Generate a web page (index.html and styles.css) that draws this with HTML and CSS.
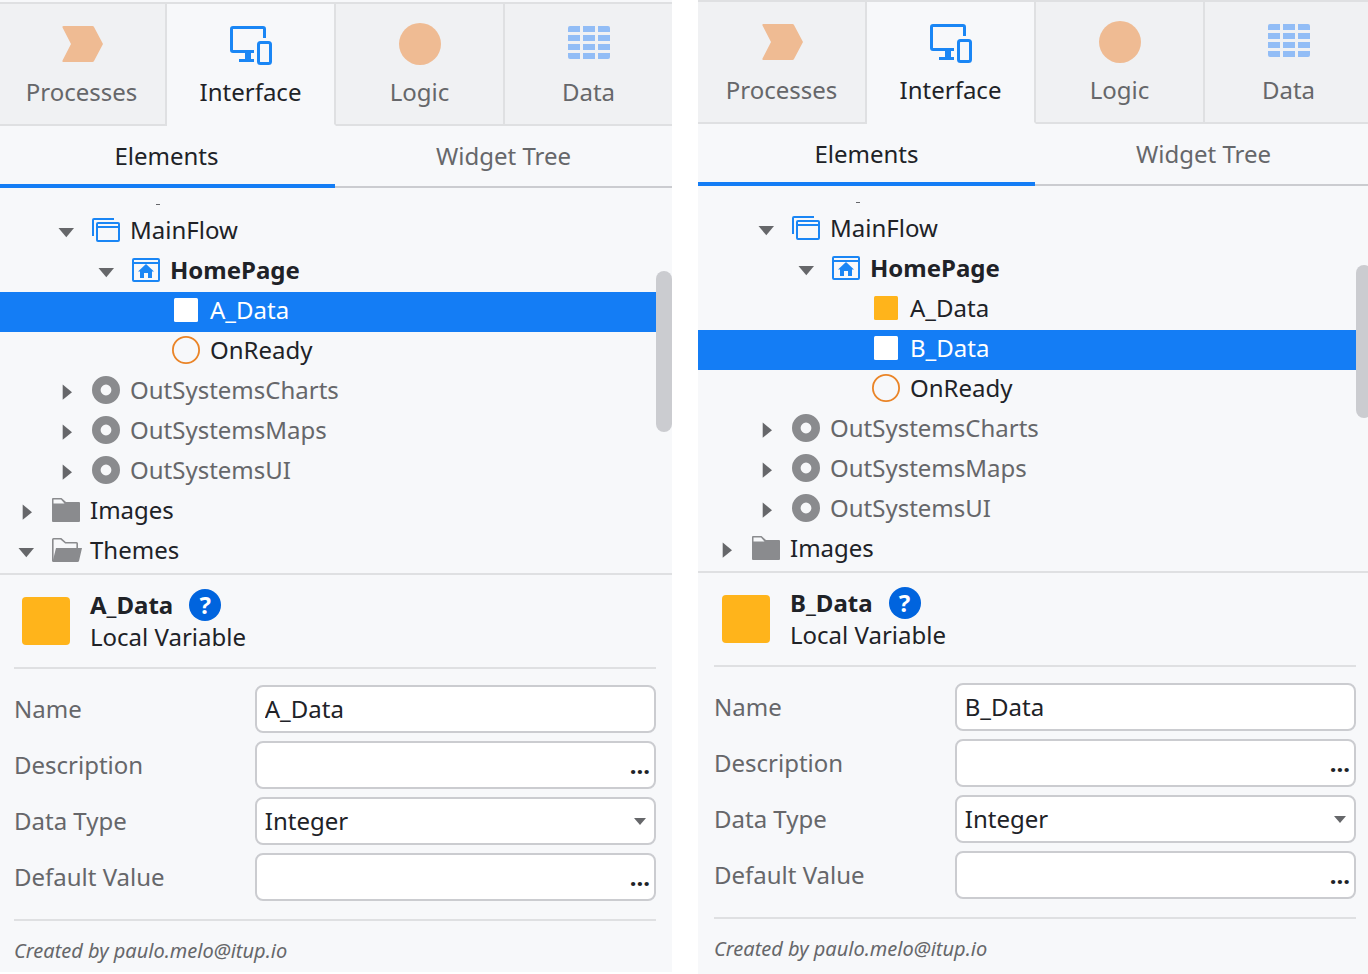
FILE: index.html
```html
<!doctype html>
<html lang="en">
<head>
<meta charset="utf-8">
<title>Service Studio</title>
<link rel="stylesheet" href="styles.css">
</head>

<body>
<!-- shared icons -->
<svg class="sprite" aria-hidden="true">
    <symbol id="processes" viewBox="0 0 42 42"><path d="M2.500 3H31.500Q32.500 3 33 4L42 21L33 38Q32.500 39 31.500 39H2.500Q.8 39 1.500 37.500L10 21L1.500 4.500Q.8 3 2.500 3z" fill="#efbb93"/></symbol>
    <symbol id="interface" viewBox="0 0 42 42">
        <path d="M34.500 15V6Q34.500 4.500 33 4.500H3Q1.500 4.500 1.500 6V27Q1.500 28.500 3 28.500H24" fill="none" stroke="#1a86f5" stroke-width="3"/>
        <path d="M15 29h6v7h3v3H9v-3h6z" fill="#1a86f5"/>
        <rect x="28.500" y="19.500" width="12" height="21" rx="2" fill="none" stroke="#1a86f5" stroke-width="3"/>
    </symbol>
    <symbol id="logic" viewBox="0 0 42 42"><circle cx="21" cy="21" r="21" fill="#efbb93"/></symbol>
    <symbol id="data" viewBox="0 0 42 42"><path d="M2 3h10v6H0V5Q0 3 2 3zM15 3h12v6H15zM30 3h10q2 0 2 2v4H30zM0 12h12v6H0zM15 12h12v6H15zM30 12h12v6H30zM0 21h12v6H0zM15 21h12v6H15zM30 21h12v6H30zM0 30h12v6H2q-2 0-2-2zM15 30h12v6H15zM30 30h12v4q0 2-2 2H30z" fill="#92bdf6"/></symbol>
    <symbol id="down" viewBox="0 0 16 28"><path d="M.500 12h15.500l-7.700 9.300z" fill="#66676a"/></symbol>
    <symbol id="right" viewBox="0 0 16 28"><path d="M4.700 8.500v15.300l9.300-7.600z" fill="#66676a"/></symbol>
    <symbol id="flow" viewBox="0 0 28 28">
        <path d="M1 20V4Q1 3 2 3H22" fill="none" stroke="#1a86f5" stroke-width="2"/>
        <rect x="5" y="7" width="22" height="18" rx="1" fill="none" stroke="#1a86f5" stroke-width="2"/>
        <path d="M5 11H27" stroke="#1a86f5" stroke-width="2"/>
    </symbol>
    <symbol id="home" viewBox="0 0 28 28">
        <rect x="1" y="3" width="26" height="22" rx="1" fill="none" stroke="#1a86f5" stroke-width="2"/>
        <path d="M1 7H27" stroke="#1a86f5" stroke-width="2"/>
        <path d="M14 8L22 15.500H20V22H16V17H12V22H8V15.500H6z" fill="#1a86f5"/>
    </symbol>
    <symbol id="variable" viewBox="0 0 28 28"><rect x="2" y="2" width="24" height="24" rx="1.500" fill="currentColor"/></symbol>
    <symbol id="event" viewBox="0 0 28 28"><circle cx="14" cy="14" r="13.100" fill="none" stroke="#ea8427" stroke-width="1.800"/></symbol>
    <symbol id="module" viewBox="0 0 28 28"><circle cx="14" cy="14" r="9.700" fill="none" stroke="#8a8b8e" stroke-width="8.600"/></symbol>
    <symbol id="folder" viewBox="0 0 28 28"><path fill-rule="evenodd" d="M1 2H9.500L14 6H27Q28 6 28 7V25Q28 26 27 26H1Q0 26 0 25V3Q0 2 1 2zM1.500 3.500V7.500H12.500L9 3.500z" fill="#8a8b8e"/></symbol>
    <symbol id="folder-open" viewBox="0 0 30 28">
        <path d="M.8 25V3.500Q.8 2.800 1.500 2.800H9L13.500 6.800H24.500Q25.200 6.800 25.200 7.500V13" fill="none" stroke="#8a8b8e" stroke-width="1.600"/>
        <path d="M4 12H30L27 25Q26.700 26 25.500 26H1Q0 26 .3 25L1 24z" fill="#8a8b8e"/>
    </symbol>
</svg>

<div class="wrap">
    <section class="panel first">
        <div class="inner">
            <nav class="tabs">
                <button type="button"><svg><use href="#processes"/></svg>Processes</button>
                <button type="button" class="on"><svg><use href="#interface"/></svg>Interface</button>
                <button type="button"><svg><use href="#logic"/></svg>Logic</button>
                <button type="button"><svg><use href="#data"/></svg>Data</button>
            </nav>
            <div class="subtabs">
                <button type="button" class="on">Elements</button>
                <button type="button">Widget Tree</button>
            </div>
            <div class="tree">
                <ul>
                    <li class="cut"></li>
                    <li class="lv1"><svg class="arrow"><use href="#down"/></svg><svg class="icon"><use href="#flow"/></svg>MainFlow</li>
                    <li class="lv2 strong"><svg class="arrow"><use href="#down"/></svg><svg class="icon"><use href="#home"/></svg>HomePage</li>
                    <li class="lv3 selected"><svg class="icon"><use href="#variable"/></svg>A_Data</li>
                    <li class="lv3"><svg class="icon"><use href="#event"/></svg>OnReady</li>
                    <li class="lv1 muted"><svg class="arrow"><use href="#right"/></svg><svg class="icon"><use href="#module"/></svg>OutSystemsCharts</li>
                    <li class="lv1 muted"><svg class="arrow"><use href="#right"/></svg><svg class="icon"><use href="#module"/></svg>OutSystemsMaps</li>
                    <li class="lv1 muted"><svg class="arrow"><use href="#right"/></svg><svg class="icon"><use href="#module"/></svg>OutSystemsUI</li>
                    <li class="lv0"><svg class="arrow"><use href="#right"/></svg><svg class="icon"><use href="#folder"/></svg>Images</li>
                    <li class="lv0"><svg class="arrow"><use href="#down"/></svg><svg class="icon open"><use href="#folder-open"/></svg>Themes</li>
                </ul>
                <div class="thumb"></div>
            </div>
            <div class="props">
                <header>
                    <span class="swatch"></span>
                    <div>
                        <h2>A_Data <button type="button" class="help">?</button></h2>
                        <p>Local Variable</p>
                    </div>
                </header>
                <form>
                    <label for="nameA">Name</label>
                    <div class="field"><input id="nameA" type="text" value="A_Data"></div>
                    <label for="descA">Description</label>
                    <div class="field"><input id="descA" type="text"><button type="button" class="more">...</button></div>
                    <label for="typeA">Data Type</label>
                    <div class="field drop"><select id="typeA"><option>Integer</option></select></div>
                    <label for="defA">Default Value</label>
                    <div class="field"><input id="defA" type="text"><button type="button" class="more">...</button></div>
                </form>
                <footer>Created by paulo.melo@itup.io</footer>
            </div>
        </div>
    </section>

    <section class="panel second">
        <div class="inner">
            <nav class="tabs">
                <button type="button"><svg><use href="#processes"/></svg>Processes</button>
                <button type="button" class="on"><svg><use href="#interface"/></svg>Interface</button>
                <button type="button"><svg><use href="#logic"/></svg>Logic</button>
                <button type="button"><svg><use href="#data"/></svg>Data</button>
            </nav>
            <div class="subtabs">
                <button type="button" class="on">Elements</button>
                <button type="button">Widget Tree</button>
            </div>
            <div class="tree">
                <ul>
                    <li class="cut"></li>
                    <li class="lv1"><svg class="arrow"><use href="#down"/></svg><svg class="icon"><use href="#flow"/></svg>MainFlow</li>
                    <li class="lv2 strong"><svg class="arrow"><use href="#down"/></svg><svg class="icon"><use href="#home"/></svg>HomePage</li>
                    <li class="lv3"><svg class="icon yellow"><use href="#variable"/></svg>A_Data</li>
                    <li class="lv3 selected"><svg class="icon"><use href="#variable"/></svg>B_Data</li>
                    <li class="lv3"><svg class="icon"><use href="#event"/></svg>OnReady</li>
                    <li class="lv1 muted"><svg class="arrow"><use href="#right"/></svg><svg class="icon"><use href="#module"/></svg>OutSystemsCharts</li>
                    <li class="lv1 muted"><svg class="arrow"><use href="#right"/></svg><svg class="icon"><use href="#module"/></svg>OutSystemsMaps</li>
                    <li class="lv1 muted"><svg class="arrow"><use href="#right"/></svg><svg class="icon"><use href="#module"/></svg>OutSystemsUI</li>
                    <li class="lv0"><svg class="arrow"><use href="#right"/></svg><svg class="icon"><use href="#folder"/></svg>Images</li>
                </ul>
                <div class="thumb"></div>
            </div>
            <div class="props">
                <header>
                    <span class="swatch"></span>
                    <div>
                        <h2>B_Data <button type="button" class="help">?</button></h2>
                        <p>Local Variable</p>
                    </div>
                </header>
                <form>
                    <label for="nameB">Name</label>
                    <div class="field"><input id="nameB" type="text" value="B_Data"></div>
                    <label for="descB">Description</label>
                    <div class="field"><input id="descB" type="text"><button type="button" class="more">...</button></div>
                    <label for="typeB">Data Type</label>
                    <div class="field drop"><select id="typeB"><option>Integer</option></select></div>
                    <label for="defB">Default Value</label>
                    <div class="field"><input id="defB" type="text"><button type="button" class="more">...</button></div>
                </form>
                <footer>Created by paulo.melo@itup.io</footer>
            </div>
        </div>
    </section>
</div>
</body>
</html>
```

FILE: styles.css
```css
*{ margin:0; padding:0; box-sizing:border-box}
body{ background:#fff; color:#202227; font:24px/32px "Noto Sans",sans-serif}
button,input,select{ font:inherit; color:inherit; background:none; border:0; min-width:0}
button{ cursor:pointer}
ul{ list-style:none}
svg{ display:block; flex:none}
.sprite{ position:absolute; width:0; height:0}

.wrap{ display:grid; grid-template-columns:672fr 670fr; gap:26px; min-height:100vh}
.panel{ background:#f7f8fa; overflow:hidden}
.first{ padding-top:2px; margin-bottom:2px}
.first .inner{ margin-left:-2px}
.second .inner{ margin-right:-4px}

/* top tabs */
.tabs{ display:grid; grid-template-columns:169fr 169fr 169fr 167fr; border-top:2px solid #dfe0e2}
.tabs button{ display:flex; flex-direction:column; align-items:center; gap:11px; padding:19px 0 16px; background:#f0f1f3; color:#66676a; border-right:2px solid #dfe0e2; border-bottom:2px solid #dfe0e2}
.tabs button:last-child{ border-right:0}
.tabs svg{ width:42px; height:42px}
.tabs .on{ background:#f7f8fa; color:#202227; border-bottom-color:#f7f8fa}

.subtabs{ display:grid; grid-template-columns:1fr 1fr}
.subtabs button{ height:62px; color:#66676a; border-bottom:2px solid #cbccd0}
.subtabs .on{ padding-top:2px; color:#202227; border-bottom:4px solid #147df5}

/* elements tree */
.tree{ position:relative; padding-bottom:1px; border-bottom:2px solid #dfe0e2}
.tree li{ display:flex; align-items:center; height:40px; margin-right:16px; padding-bottom:4px}
.tree .cut{ height:24px; padding:8px 0 0 158px}
.tree .cut:before{ content:""; width:4px; height:1px; background:#66676a}
.tree .lv0{ padding-left:20px}
.tree .lv1{ padding-left:60px}
.tree .lv2{ padding-left:100px}
.tree .lv3{ padding-left:174px}
.tree .strong{ font-weight:bold}
.tree .muted{ color:#66676a}
.tree .selected{ background:#147df5; color:#fff}
.arrow{ width:16px; height:28px; margin-right:18px}
.icon{ width:28px; height:28px; margin-right:10px}
.open{ width:30px; margin-right:8px}
.yellow{ color:#ffb41b}
.thumb{ position:absolute; top:83px; right:0; width:16px; height:161px; border-radius:8px; background:#cbccd0}
.second .thumb{ top:79px; height:153px}

/* properties */
.props{ padding:0 16px}
.props header{ display:flex; align-items:center; gap:20px; padding:14px 8px; border-bottom:2px solid #dfe0e2}
.swatch{ width:48px; height:48px; border-radius:4px; background:#ffb41b}
.props h2{ display:flex; gap:16px; font-size:24px}
.help{ width:32px; height:32px; border-radius:50%; background:#0064de; color:#fff}
.props form{ display:grid; grid-template-columns:3fr 5fr; gap:8px 0; align-items:center; padding:16px 0 18px; border-bottom:2px solid #dfe0e2}
.props label{ color:#66676a}
.field{ position:relative; display:flex; height:48px; border:2px solid #cbccd0; border-radius:8px; background:#fff}
.field input,.field select{ flex:1; padding:0 8px; appearance:none; outline:0}
.more{ padding:0 4px; font-weight:bold}
.drop:after{ content:""; position:absolute; top:19px; right:8px; border:6px solid transparent; border-top:7px solid #66676a; border-bottom:0; pointer-events:none}
.props footer{ padding:14px 0 5px; color:#66676a; font-size:20px; font-style:italic}
```
